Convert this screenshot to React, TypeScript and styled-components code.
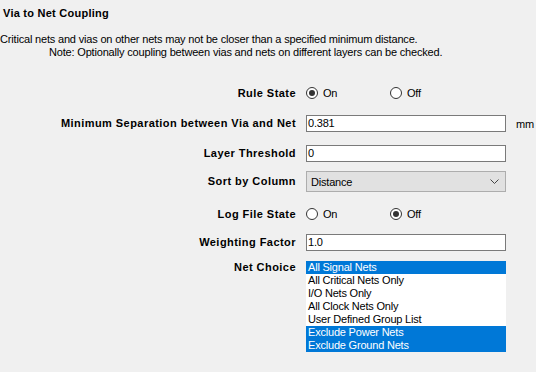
import styled, { createGlobalStyle } from 'styled-components';

const GlobalStyle = createGlobalStyle`
  html, body {
    margin: 0;
    padding: 0;
    background: #f0f0f0;
  }
  body {
    font-family: 'Liberation Sans', Arial, sans-serif;
    font-size: 11px;
    color: #000;
  }
`;

const Page = styled.div`
  width: 536px;
  height: 372px;
  overflow: hidden;
  background: #f0f0f0;
`;

const Title = styled.div`
  font-weight: bold;
  line-height: 13px;
  letter-spacing: 0.25px;
  padding: 7px 0 0 3px;
`;

const Description = styled.div`
  margin-top: 13px;
  line-height: 13px;
  letter-spacing: -0.18px;
`;

const DescLine = styled.div<{ $indent?: number }>`
  padding-left: ${(p) => p.$indent ?? 0}px;
  white-space: nowrap;
`;

const Form = styled.div`
  display: flex;
  flex-direction: column;
`;

const Row = styled.div<{ $gap: number; $height: number; $top?: boolean }>`
  display: grid;
  grid-template-columns: 296px 200px auto;
  column-gap: 10px;
  align-items: ${(p) => (p.$top ? 'start' : 'center')};
  margin-top: ${(p) => p.$gap}px;
  height: ${(p) => p.$height}px;
`;

const Label = styled.div<{ $top?: boolean }>`
  font-weight: bold;
  text-align: right;
  white-space: nowrap;
  line-height: 13px;
  letter-spacing: 0.45px;
  padding-top: ${(p) => (p.$top ? 1 : 0)}px;
`;

const Unit = styled.div`
  letter-spacing: -0.2px;
`;

const TextBox = styled.div`
  box-sizing: border-box;
  height: 17px;
  background: #fff;
  border: 1px solid #7a7a7a;
  padding: 1px 0 0 1px;
  line-height: 13px;
  letter-spacing: -0.2px;
`;

const Select = styled.div`
  box-sizing: border-box;
  height: 21px;
  background: #e1e1e1;
  border: 1px solid #adadad;
  display: flex;
  align-items: center;
  justify-content: space-between;
  padding: 0 6px 0 4px;
  letter-spacing: -0.2px;
`;

const RadioGroup = styled.div`
  display: flex;
`;

const RadioOption = styled.div`
  display: flex;
  align-items: center;
  width: 84px;
  gap: 5px;
  line-height: 13px;
  letter-spacing: -0.2px;
`;

const RadioCircle = styled.span<{ $checked?: boolean }>`
  box-sizing: border-box;
  width: 12px;
  height: 12px;
  border-radius: 50%;
  border: 1px solid #333;
  background: #fff;
  display: flex;
  align-items: center;
  justify-content: center;
  &::after {
    content: '';
    width: 6px;
    height: 6px;
    border-radius: 50%;
    background: ${(p) => (p.$checked ? '#333' : 'transparent')};
  }
`;

const ListBox = styled.div`
  height: 92px;
  display: flex;
  flex-direction: column;
  padding-top: 1px;
  box-sizing: border-box;
`;

const ListItem = styled.div<{ $selected?: boolean }>`
  height: 13px;
  line-height: 13px;
  padding-left: 2px;
  white-space: nowrap;
  letter-spacing: -0.2px;
  background: ${(p) => (p.$selected ? '#0078d7' : '#fff')};
  color: ${(p) => (p.$selected ? '#fff' : '#000')};
`;

const Chevron = () => (
  <svg width="9" height="5" viewBox="0 0 9 5">
    <path d="M0.5 0.5 L4.5 4.5 L8.5 0.5" fill="none" stroke="#444" strokeWidth="1" />
  </svg>
);

function Radio({ options, value }: { options: string[]; value: string }) {
  return (
    <RadioGroup>
      {options.map((o) => (
        <RadioOption key={o}>
          <RadioCircle $checked={o === value} />
          {o}
        </RadioOption>
      ))}
    </RadioGroup>
  );
}

const netChoices = [
  { name: 'All Signal Nets', selected: true },
  { name: 'All Critical Nets Only', selected: false },
  { name: 'I/O Nets Only', selected: false },
  { name: 'All Clock Nets Only', selected: false },
  { name: 'User Defined Group List', selected: false },
  { name: 'Exclude Power Nets', selected: true },
  { name: 'Exclude Ground Nets', selected: true },
];

export default function App() {
  return (
    <Page>
      <GlobalStyle />
      <Title>Via to Net Coupling</Title>
      <Description>
        <DescLine>Critical nets and vias on other nets may not be closer than a specified minimum distance.</DescLine>
        <DescLine $indent={49}>Note: Optionally coupling between vias and nets on different layers can be checked.</DescLine>
      </Description>
      <Form>
        <Row $gap={26} $height={16}>
          <Label>Rule State</Label>
          <Radio options={['On', 'Off']} value="On" />
        </Row>
        <Row $gap={14} $height={17}>
          <Label>Minimum Separation between Via and Net</Label>
          <TextBox>0.381</TextBox>
          <Unit>mm</Unit>
        </Row>
        <Row $gap={13} $height={17}>
          <Label>Layer Threshold</Label>
          <TextBox>0</TextBox>
        </Row>
        <Row $gap={9} $height={21}>
          <Label>Sort by Column</Label>
          <Select>
            <span>Distance</span>
            <Chevron />
          </Select>
        </Row>
        <Row $gap={14} $height={16}>
          <Label>Log File State</Label>
          <Radio options={['On', 'Off']} value="Off" />
        </Row>
        <Row $gap={12} $height={17}>
          <Label>Weighting Factor</Label>
          <TextBox>1.0</TextBox>
        </Row>
        <Row $gap={9} $height={92} $top>
          <Label $top>Net Choice</Label>
          <ListBox>
            {netChoices.map((c) => (
              <ListItem key={c.name} $selected={c.selected}>
                {c.name}
              </ListItem>
            ))}
          </ListBox>
        </Row>
      </Form>
    </Page>
  );
}
